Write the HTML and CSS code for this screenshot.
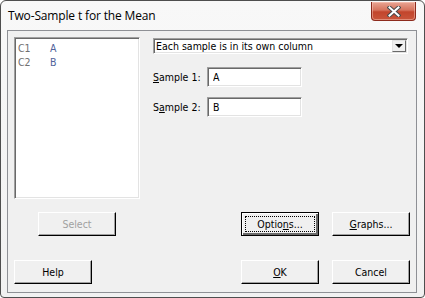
FILE: index.html
```html
<!DOCTYPE html>
<html lang="en">
<head>
    <meta charset="UTF-8">
    <title>Two-Sample t for the Mean</title>
    <link rel="stylesheet" href="styles.css">
</head>
<body>
    <div class="window">
        <div class="titlebar">
            <span class="title">Two-Sample t for the Mean</span>
            <div class="close-btn">
                <svg width="14" height="11" viewBox="0 0 14 11">
                    <path d="M2.5 1.5 L11.5 9.5 M11.5 1.5 L2.5 9.5" stroke="#4a4a4a" stroke-width="4" stroke-linecap="square"/>
                    <path d="M2.5 1.5 L11.5 9.5 M11.5 1.5 L2.5 9.5" stroke="#ffffff" stroke-width="2" stroke-linecap="square"/>
                </svg>
            </div>
        </div>

        <div class="client">
            <div class="main">
                <div class="varlist">
                    <div class="var-row"><span class="col-id">C1</span><span class="col-name">A</span></div>
                    <div class="var-row"><span class="col-id">C2</span><span class="col-name">B</span></div>
                </div>

                <div class="right">
                    <div class="combo">
                        <span class="combo-text">Each sample is in its own column</span>
                        <span class="combo-btn"><span class="arrow"></span></span>
                    </div>
                    <div class="field">
                        <label for="sample1"><u>S</u>ample 1:</label>
                        <input type="text" id="sample1" value="A">
                    </div>
                    <div class="field">
                        <label for="sample2">S<u>a</u>mple 2:</label>
                        <input type="text" id="sample2" value="B">
                    </div>
                </div>
            </div>

            <div class="btn-row">
                <div class="left-slot">
                    <button class="btn" disabled>Select</button>
                </div>
                <div class="right-group">
                    <button class="btn default"><span class="focus">Optio<u>n</u>s...</span></button>
                    <button class="btn"><u>G</u>raphs...</button>
                </div>
            </div>

            <div class="btn-row bottom">
                <button class="btn">Help</button>
                <div class="right-group">
                    <button class="btn"><u>O</u>K</button>
                    <button class="btn">Cancel</button>
                </div>
            </div>
        </div>
    </div>
</body>
</html>
```

FILE: styles.css
```css
html, body {
    margin: 0;
    padding: 0;
    background-color: #ffffff;
}

.window {
    width: 425px;
    height: 298px;
    box-sizing: border-box;
    border: 1px solid #4e4e4e;
    border-radius: 6px 6px 4px 4px;
    background: linear-gradient(to bottom, #f8f8f8, #f1f1f1);
    overflow: hidden;
}

.titlebar {
    height: 29px;
    display: flex;
    justify-content: space-between;
    align-items: flex-start;
}

.title {
    font-family: "Open Sans", "Noto Sans", sans-serif;
    font-size: 12px;
    letter-spacing: -0.15px;
    color: #000000;
    padding-left: 7px;
    padding-top: 7px;
    line-height: 16px;
}

.close-btn {
    width: 45px;
    height: 19px;
    margin-top: 1px;
    margin-right: 8px;
    box-sizing: border-box;
    border: 1px solid #8c2a1c;
    border-top: none;
    border-radius: 0 0 4px 4px;
    background: linear-gradient(to bottom, #e9a593 0%, #d6735d 45%, #c2452c 55%, #c9553b 100%);
    box-shadow: inset 0 0 0 1px rgba(255, 210, 200, 0.45);
    display: flex;
    justify-content: center;
    align-items: center;
}

.client {
    margin: 0 7px 0 6px;
    border: 1px solid #8e9095;
    background-color: #f0f0f0;
    padding: 6px 6px 8px 6px;
    font-family: "DejaVu Sans Condensed", "Liberation Sans", sans-serif;
    font-stretch: condensed;
    font-size: 10.5px;
    color: #000000;
}

.main {
    display: flex;
    gap: 13px;
}

.varlist {
    width: 126px;
    height: 162px;
    box-sizing: border-box;
    background-color: #ffffff;
    border: 1px solid;
    border-color: #a0a0a0 #ffffff #ffffff #a0a0a0;
    box-shadow: inset 1px 1px 0 #696969, inset -1px -1px 0 #e3e3e3;
    padding: 3px 3px;
}

.var-row {
    display: flex;
    line-height: 14px;
    color: #707070;
}

.col-id {
    width: 32px;
}

.col-name {
    color: #51639a;
}

.right {
    flex: 1;
    margin-right: 2px;
    padding-top: 1px;
}

.combo {
    height: 16px;
    box-sizing: border-box;
    background-color: #ffffff;
    border: 1px solid;
    border-color: #a0a0a0 #ffffff #ffffff #a0a0a0;
    box-shadow: inset 1px 1px 0 #696969, inset -1px -1px 0 #e3e3e3;
    display: flex;
    justify-content: space-between;
    align-items: center;
}

.combo-text {
    padding-left: 2px;
    line-height: 14px;
}

.combo-btn {
    width: 14px;
    height: 12px;
    margin-right: 1px;
    box-sizing: border-box;
    background-color: #f0f0f0;
    border: 1px solid;
    border-color: #e3e3e3 #696969 #696969 #e3e3e3;
    display: flex;
    justify-content: center;
    align-items: center;
}

.arrow {
    width: 0;
    height: 0;
    border-left: 4px solid transparent;
    border-right: 4px solid transparent;
    border-top: 4px solid #000000;
}

.field {
    display: flex;
    align-items: center;
    margin-top: 13px;
}

.field + .field {
    margin-top: 10px;
}

.field label {
    width: 54px;
}

input[type="text"] {
    width: 95px;
    height: 20px;
    box-sizing: border-box;
    margin: 0;
    padding: 0 5px;
    font-family: "DejaVu Sans Condensed", "Liberation Sans", sans-serif;
    font-stretch: condensed;
    font-size: 10.5px;
    color: #000000;
    background-color: #ffffff;
    border: 1px solid;
    border-color: #a0a0a0 #ffffff #ffffff #a0a0a0;
    box-shadow: inset 1px 1px 0 #696969, inset -1px -1px 0 #e3e3e3;
    outline: none;
}

.btn-row {
    display: flex;
    justify-content: space-between;
    margin-top: 13px;
}

.btn-row.bottom {
    margin-top: 24px;
}

.left-slot {
    width: 126px;
    display: flex;
    justify-content: center;
}

.right-group {
    display: flex;
    gap: 13px;
}

.btn {
    width: 78px;
    height: 24px;
    box-sizing: border-box;
    margin: 0;
    padding: 0;
    font-family: "DejaVu Sans Condensed", "Liberation Sans", sans-serif;
    font-stretch: condensed;
    font-size: 10.5px;
    color: #000000;
    background-color: #f0f0f0;
    border: 1px solid;
    border-color: #ffffff #000000 #000000 #ffffff;
    box-shadow: inset -1px -1px 0 #a0a0a0;
    border-radius: 0;
    display: flex;
    justify-content: center;
    align-items: center;
}

.btn:disabled {
    color: #a0a0a0;
}

.btn.default {
    border: 1px solid #000000;
    box-shadow: inset 1px 1px 0 #ffffff, inset -2px -2px 0 #696969, inset -1px -1px 0 #a0a0a0;
}

.focus {
    width: 70px;
    height: 16px;
    box-sizing: border-box;
    border: 1px dotted #000000;
    display: flex;
    justify-content: center;
    align-items: center;
}
```
